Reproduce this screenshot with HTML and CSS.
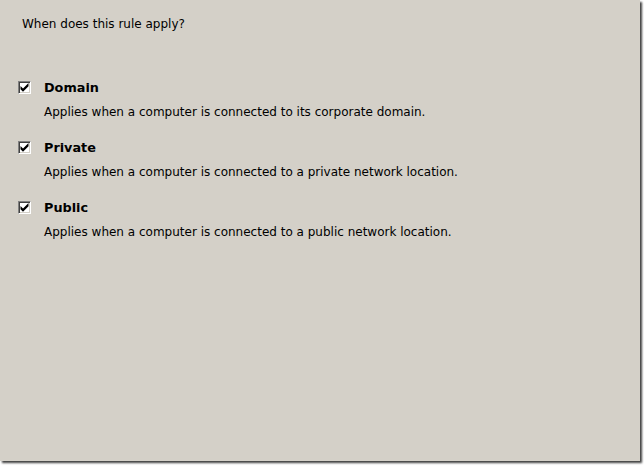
FILE: index.html
```html
<!DOCTYPE html>
<html>
<head>
<meta charset="utf-8">
<link rel="stylesheet" href="styles.css">
</head>
<body>
<div class="panel">
  <div class="question">When does this rule apply?</div>
  <div class="options">
    <div class="option">
      <div class="head"><span class="cb"><svg width="9" height="9" viewBox="0 0 9 9"><path d="M0.5 3 L3 5.5 L8.5 0 L8.5 3.2 L3 8.7 L0.5 6.2 Z" fill="#000"/></svg></span><span class="title">Domain</span></div>
      <div class="desc">Applies when a computer is connected to its corporate domain.</div>
    </div>
    <div class="option">
      <div class="head"><span class="cb"><svg width="9" height="9" viewBox="0 0 9 9"><path d="M0.5 3 L3 5.5 L8.5 0 L8.5 3.2 L3 8.7 L0.5 6.2 Z" fill="#000"/></svg></span><span class="title">Private</span></div>
      <div class="desc">Applies when a computer is connected to a private network location.</div>
    </div>
    <div class="option">
      <div class="head"><span class="cb"><svg width="9" height="9" viewBox="0 0 9 9"><path d="M0.5 3 L3 5.5 L8.5 0 L8.5 3.2 L3 8.7 L0.5 6.2 Z" fill="#000"/></svg></span><span class="title">Public</span></div>
      <div class="desc">Applies when a computer is connected to a public network location.</div>
    </div>
  </div>
</div>
</body>
</html>
```

FILE: styles.css
```css
html, body {
  margin: 0;
  padding: 0;
  background: #ffffff;
}
body {
  width: 644px;
  height: 467px;
  overflow: hidden;
}
.panel {
  width: 640px;
  height: 461px;
  background: #d4d0c8;
  box-shadow: 2px 2px 2px rgba(0,0,0,0.75);
  font-family: "DejaVu Sans", "Liberation Sans", sans-serif;
  font-size: 12px;
  color: #000;
  box-sizing: border-box;
  padding: 16px 0 0 22px;
}
.question {
  line-height: 16px;
}
.options {
  margin-top: 47px;
  margin-left: -4px;
  display: flex;
  flex-direction: column;
  gap: 19px;
}
.head {
  display: flex;
  align-items: center;
  height: 16px;
}
.cb {
  width: 13px;
  height: 13px;
  box-sizing: border-box;
  background: #fff;
  border-style: solid;
  border-width: 1px;
  border-color: #808080 #ffffff #ffffff #808080;
  box-shadow: inset 1px 1px 0 #404040, inset -1px -1px 0 #d4d0c8;
  display: flex;
  align-items: center;
  justify-content: center;
  margin-right: 13px;
}
.cb svg { display: block; }
.title {
  font-weight: bold;
  font-size: 12.8px;
}
.desc {
  margin-left: 26px;
  margin-top: 9px;
  line-height: 16px;
}
```
